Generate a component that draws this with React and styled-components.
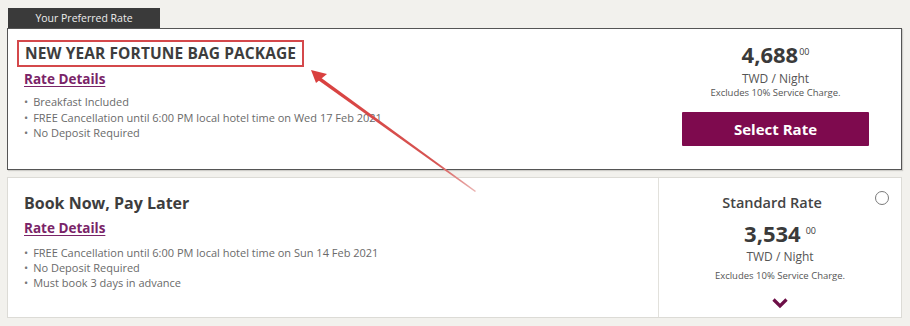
import React from 'react';
import styled, { createGlobalStyle } from 'styled-components';

const rates = [
    {
        id: 'newyear',
        preferred: true,
        title: 'NEW YEAR FORTUNE BAG PACKAGE',
        perks: [
            'Breakfast Included',
            'FREE Cancellation until 6:00 PM local hotel time on Wed 17 Feb 2021',
            'No Deposit Required',
        ],
        price: '4,688',
        cents: '00',
    },
    {
        id: 'paylater',
        preferred: false,
        title: 'Book Now, Pay Later',
        label: 'Standard Rate',
        perks: [
            'FREE Cancellation until 6:00 PM local hotel time on Sun 14 Feb 2021',
            'No Deposit Required',
            'Must book 3 days in advance',
        ],
        price: '3,534',
        cents: '00',
    },
];

const App = () => {
    const [preferred, standard] = rates;

    return (
        <>
            <GlobalStyle />
            <Page>
                <PreferredBlock>
                    <Tab>Your Preferred Rate</Tab>
                    <Card $variant="preferred">
                        <Info>
                            <Highlight>
                                <PackageTitle>{preferred.title}</PackageTitle>
                            </Highlight>
                            <DetailsLink href="#">Rate Details</DetailsLink>
                            <PerkList>
                                {preferred.perks.map((perk) => (
                                    <li key={perk}>{perk}</li>
                                ))}
                            </PerkList>
                        </Info>
                        <PriceColumn>
                            <Price>
                                {preferred.price}
                                <Cents>{preferred.cents}</Cents>
                            </Price>
                            <Unit $gap={5}>TWD / Night</Unit>
                            <Note $tight>Excludes 10% Service Charge.</Note>
                            <SelectBtn type="button">Select Rate</SelectBtn>
                        </PriceColumn>
                    </Card>
                    {/* annotation arrow drawn over the card */}
                    <Arrow width="172" height="126" viewBox="0 0 172 126">
                        <defs>
                            <linearGradient id="arrowFade" x1="0" y1="0" x2="1" y2="1">
                                <stop offset="0" stopColor="#d9403f" />
                                <stop offset="0.75" stopColor="#d65553" />
                                <stop offset="1" stopColor="#ebb7b5" />
                            </linearGradient>
                        </defs>
                        <path d="M10 7 L166 121 L165 122 L8 10 Z" fill="url(#arrowFade)" />
                        <path d="M1 0 L17 4 L6 13 Z" fill="#d9403f" />
                    </Arrow>
                </PreferredBlock>

                <Card $variant="standard">
                    <Info>
                        <RateTitle>{standard.title}</RateTitle>
                        <DetailsLink href="#" $gap={5}>Rate Details</DetailsLink>
                        <PerkList $gap={8} $line={15.2}>
                            {standard.perks.map((perk) => (
                                <li key={perk}>{perk}</li>
                            ))}
                        </PerkList>
                    </Info>
                    <SidePanel>
                        <Radio />
                        <RateLabel>{standard.label}</RateLabel>
                        <Price>
                            {standard.price}
                            <Cents $spaced>{standard.cents}</Cents>
                        </Price>
                        <Unit>TWD / Night</Unit>
                        <Note $loose>Excludes 10% Service Charge.</Note>
                        <Chevron viewBox="0 0 16 12" width="16" height="12">
                            <path d="M1.5 2.5 L8 9 L14.5 2.5" fill="none" stroke="#6d0f47" strokeWidth="3.2" />
                        </Chevron>
                    </SidePanel>
                </Card>
            </Page>
        </>
    );
};

export default App;

const GlobalStyle = createGlobalStyle`
    body {
        margin: 0;
        background: #f2f1ed;
        font-family: 'Open Sans', 'Liberation Sans', sans-serif;
        color: #3d3d3d;
    }
`;

const Page = styled.div`
    width: 910px;
    height: 326px;
    box-sizing: border-box;
    padding: 8px 8px 0 7px;
    display: flex;
    flex-direction: column;
    gap: 7px;
`;

const PreferredBlock = styled.section`
    position: relative;
    display: flex;
    flex-direction: column;
`;

const Tab = styled.div`
    align-self: flex-start;
    width: 152px;
    height: 20px;
    margin-left: 1px;
    background: #3a3a3a;
    color: #ededed;
    font-size: 10.5px;
    line-height: 20px;
    text-align: center;
`;

const Card = styled.div`
    display: grid;
    grid-template-columns: 1fr 243px;
    background: #fff;
    box-sizing: border-box;
    border: ${({ $variant }) => ($variant === 'preferred' ? '1.5px solid #555' : '1px solid #dcdbd6')};
    height: ${({ $variant }) => ($variant === 'preferred' ? '142px' : '141px')};
    box-shadow: ${({ $variant }) => ($variant === 'preferred' ? '1px 1px 1px rgba(0,0,0,0.15)' : 'none')};
`;

const Info = styled.div`
    padding: 11px 16px 0 9px;
    display: flex;
    flex-direction: column;
    align-items: flex-start;
`;

const Highlight = styled.div`
    border: 2px solid #d4484b;
    padding: 1px 6px 2px 6px;
`;

const PackageTitle = styled.h2`
    margin: 0;
    font-size: 15.5px;
    font-weight: 700;
    line-height: 20px;
    color: #3d3d3d;
    letter-spacing: 0.1px;
`;

const RateTitle = styled.h2`
    margin: 3px 0 0 7px;
    font-size: 16px;
    font-weight: 700;
    line-height: 22px;
    color: #3d3d3d;
`;

const DetailsLink = styled.a`
    margin: ${({ $gap = 3 }) => `${$gap}px 0 0 7px`};
    font-size: 13.5px;
    font-weight: 700;
    line-height: 18px;
    color: #7a2468;
    text-decoration: underline;
    text-underline-offset: 2px;
`;

const PerkList = styled.ul`
    margin: ${({ $gap = 6 }) => `${$gap}px 0 0 7px`};
    padding: 0;
    list-style: none;
    font-size: 11px;
    line-height: ${({ $line = 15.5 }) => `${$line}px`};
    color: #6a6a6a;

    li::before {
        content: '•';
        margin-right: 5px;
        color: #777;
    }
`;

const PriceColumn = styled.div`
    display: flex;
    flex-direction: column;
    align-items: center;
    padding: 13px 32px 0 24px;
`;

const Price = styled.div`
    font-size: 22px;
    font-weight: 700;
    line-height: 24px;
    color: #3a3a3a;
`;

const Cents = styled.sup`
    font-size: 9px;
    font-weight: 400;
    line-height: 0;
    margin-left: ${({ $spaced }) => ($spaced ? '5px' : '1px')};
    vertical-align: 8px;
`;

const Unit = styled.div`
    margin-top: ${({ $gap = 4 }) => `${$gap}px`};
    font-size: 12px;
    line-height: 16px;
    color: #555;
`;

const Note = styled.div`
    font-size: 9.5px;
    line-height: 13px;
    margin-top: ${({ $loose, $tight }) => ($loose ? '4px' : $tight ? '-1px' : '0')};
    color: #555;
`;

const SelectBtn = styled.button`
    margin-top: 13px;
    width: 100%;
    height: 34px;
    border: none;
    border-radius: 1px;
    background: #7e0a4e;
    color: #fff;
    font-family: 'Open Sans', 'Liberation Sans', sans-serif;
    font-size: 15px;
    font-weight: 700;
    cursor: pointer;
`;

const SidePanel = styled.div`
    position: relative;
    border-left: 1.5px solid #e2e1dc;
    display: flex;
    flex-direction: column;
    align-items: center;
    padding: 15px 0 0 0;
`;

const Radio = styled.span`
    position: absolute;
    top: 13px;
    right: 12px;
    width: 12px;
    height: 12px;
    border: 1px solid #7a7a7a;
    border-radius: 50%;
`;

const RateLabel = styled.div`
    font-size: 14.5px;
    font-weight: 600;
    line-height: 20px;
    color: #444;
    margin-right: 16px;
    margin-bottom: 8px;
`;

const Chevron = styled.svg`
    margin-top: 15px;
`;

const Arrow = styled.svg`
    position: absolute;
    left: 303px;
    top: 62px;
    pointer-events: none;
`;
